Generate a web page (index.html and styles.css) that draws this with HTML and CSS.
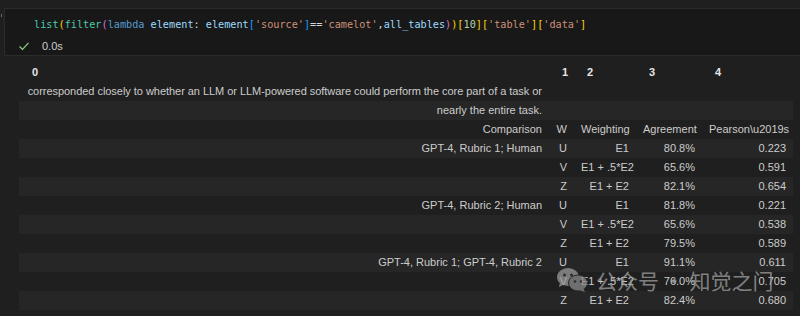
FILE: index.html
```html
<!DOCTYPE html>
<html lang="en">
<head>
    <meta charset="UTF-8">
    <meta name="viewport" content="width=device-width, initial-scale=1.0">
    <title>Notebook output</title>
    <link rel="stylesheet" href="styles.css">
</head>
<body>
    <!-- Code cell -->
    <div class="cell">
        <span class="cell-tick"></span>
        <div class="code-box">
            <pre class="code"><span class="cls">list</span><span class="b1">(</span><span class="cls">filter</span><span class="b2">(</span><span class="kw">lambda</span> <span class="var">element</span><span class="op">:</span> <span class="var">element</span><span class="b3">[</span><span class="str">'source'</span><span class="b3">]</span><span class="op">==</span><span class="str">'camelot'</span><span class="op">,</span><span class="var">all_tables</span><span class="b2">)</span><span class="b1">)</span><span class="b1">[</span><span class="num">10</span><span class="b1">]</span><span class="b1">[</span><span class="str">'table'</span><span class="b1">]</span><span class="b1">[</span><span class="str">'data'</span><span class="b1">]</span></pre>
            <div class="status">
                <svg class="check" width="10" height="9" viewBox="0 0 10 9"><polyline points="0.5,4.5 3.5,7.5 9.5,0.8" fill="none" stroke="#89d185" stroke-width="1.2"/></svg>
                <span>0.0s</span>
            </div>
        </div>
    </div>

    <!-- Output: data frame -->
    <div class="output">
        <table class="df">
            <colgroup>
                <col class="c0"><col class="c1"><col class="c2"><col class="c3"><col class="c4">
            </colgroup>
            <thead>
                <tr><th>0</th><th>1</th><th>2</th><th>3</th><th>4</th></tr>
            </thead>
            <tbody>
                <tr><td class="long">corresponded closely to whether an LLM or LLM-powered software could perform the core part of a task or</td><td></td><td></td><td></td><td></td></tr>
                <tr><td>nearly the entire task.</td><td></td><td></td><td></td><td></td></tr>
                <tr><td>Comparison</td><td>W</td><td>Weighting</td><td>Agreement</td><td>Pearson\u2019s</td></tr>
                <tr><td>GPT-4, Rubric 1; Human</td><td>U</td><td>E1</td><td>80.8%</td><td>0.223</td></tr>
                <tr><td></td><td>V</td><td>E1 + .5*E2</td><td>65.6%</td><td>0.591</td></tr>
                <tr><td></td><td>Z</td><td>E1 + E2</td><td>82.1%</td><td>0.654</td></tr>
                <tr><td>GPT-4, Rubric 2; Human</td><td>U</td><td>E1</td><td>81.8%</td><td>0.221</td></tr>
                <tr><td></td><td>V</td><td>E1 + .5*E2</td><td>65.6%</td><td>0.538</td></tr>
                <tr><td></td><td>Z</td><td>E1 + E2</td><td>79.5%</td><td>0.589</td></tr>
                <tr><td>GPT-4, Rubric 1; GPT-4, Rubric 2</td><td>U</td><td>E1</td><td>91.1%</td><td>0.611</td></tr>
                <tr><td></td><td>V</td><td>E1 + .5*E2</td><td>76.0%</td><td>0.705</td></tr>
                <tr><td></td><td>Z</td><td>E1 + E2</td><td>82.4%</td><td>0.680</td></tr>
            </tbody>
        </table>

        <!-- watermark over the table -->
        <div class="watermark">
            <svg class="wx" width="31" height="24" viewBox="0 0 31 24">
                <ellipse cx="11" cy="9" rx="11" ry="9" fill="#9a9a9a"/>
                <path d="M3 14 L2 19 L8 16 Z" fill="#9a9a9a"/>
                <circle cx="7.5" cy="7" r="1.5" fill="#333"/>
                <circle cx="14.5" cy="7" r="1.5" fill="#333"/>
                <ellipse cx="21" cy="15" rx="9.5" ry="8" fill="#8a8a8a" stroke="#2a2a2a" stroke-width="1"/>
                <path d="M26 20 L28 24 L22 22 Z" fill="#8a8a8a"/>
                <circle cx="18" cy="13.5" r="1.3" fill="#333"/>
                <circle cx="24" cy="13.5" r="1.3" fill="#333"/>
            </svg>
            <span>公众号 · 知觉之门</span>
        </div>
    </div>
</body>
</html>
```

FILE: styles.css
```css
/* Page */
body {
    margin: 0;
    background-color: #1f1f1f;
    color: #cccccc;
    font-family: "Liberation Sans", Arial, sans-serif;
}

/* Code cell */
.cell {
    position: relative;
    padding-top: 8px;
}

.cell-tick {
    position: absolute;
    left: 1px;
    top: 14px;
    width: 1px;
    height: 3px;
    background-color: #6a6a6a;
}

.code-box {
    margin-left: 4px;
    height: 46px;
    background-color: #181818;
    border: 1px solid #2b2b2b;
    border-right: none;
}

.code {
    margin: 0;
    padding: 8px 0 0 29px;
    height: 16px;
    line-height: 16px;
    font-family: "DejaVu Sans Mono", "Liberation Mono", monospace;
    font-size: 10.2px;
    color: #cccccc;
}

.cls { color: #4ec9b0; }
.kw { color: #569cd6; }
.var { color: #9cdcfe; }
.str { color: #ce9178; }
.num { color: #b5cea8; }
.op { color: #d4d4d4; }
.b1 { color: #ffd700; }
.b2 { color: #da70d6; }
.b3 { color: #179fff; }

.status {
    display: flex;
    align-items: center;
    gap: 13px;
    margin-top: 5px;
    padding-left: 14px;
    height: 16px;
    font-size: 11px;
    color: #cccccc;
}

/* Output table */
.output {
    position: relative;
    padding: 7px 0 0 19px;
}

.df {
    table-layout: fixed;
    width: 774px;
    border-collapse: collapse;
    font-size: 11px;
}

.df .c0 { width: 530px; }
.df .c1 { width: 25px; }
.df .c2 { width: 62px; }
.df .c3 { width: 66px; }
.df .c4 { width: 91px; }

.df th,
.df td {
    height: 19px;
    line-height: 19px;
    padding: 0 7px;
    white-space: nowrap;
}

.df th {
    text-align: left;
    padding-left: 13px;
    font-weight: bold;
    color: #e6e6e6;
}

.df td {
    text-align: right;
}

/* squeeze the long sentence so it fits its column */
.df td.long {
    letter-spacing: -0.04px;
}

.df tbody tr:nth-child(even) {
    background-color: #262626;
}

/* Watermark */
.watermark {
    position: absolute;
    left: 557px;
    top: 209px;
    display: flex;
    align-items: center;
    gap: 8px;
    opacity: 0.75;
    font-family: "Noto Sans CJK SC", sans-serif;
    font-size: 21px;
    color: #a0a0a0;
    pointer-events: none;
}
```
